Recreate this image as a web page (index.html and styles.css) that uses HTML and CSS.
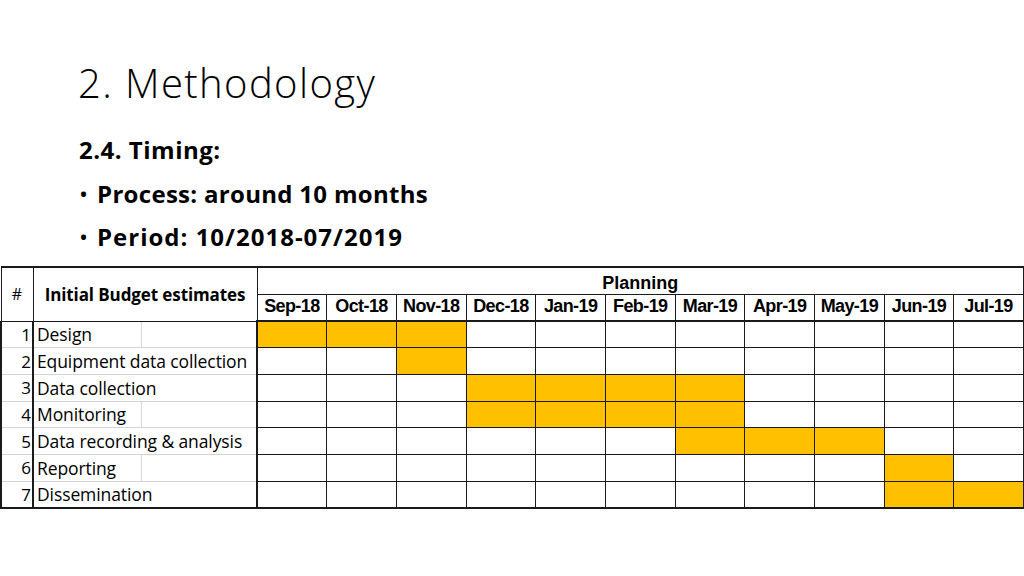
FILE: index.html
```html
<!DOCTYPE html>
<html>
<head>
<meta charset="utf-8">
<link rel="stylesheet" href="styles.css">
</head>
<body>
<div class="slide">
  <h1 class="title">2. Methodology</h1>
  <div class="body">
    <p class="sub">2.4. Timing:</p>
    <ul class="bullets">
      <li>Process: around 10 months</li>
      <li class="wide">Period: 10/2018-07/2019</li>
    </ul>
  </div>
  <table class="gantt">
    <colgroup>
      <col class="c-num"><col class="c-name">
      <col class="c-m"><col class="c-m"><col class="c-m"><col class="c-m"><col class="c-m"><col class="c-m"><col class="c-m"><col class="c-m"><col class="c-m"><col class="c-m"><col class="c-m">
    </colgroup>
    <thead>
      <tr class="h1">
        <th class="num-h" rowspan="2">#</th>
        <th class="name-h" rowspan="2">Initial Budget estimates</th>
        <th class="plan" colspan="11">Planning</th>
      </tr>
      <tr class="h2">
        <th>Sep-18</th><th>Oct-18</th><th>Nov-18</th><th>Dec-18</th><th>Jan-19</th><th>Feb-19</th><th>Mar-19</th><th>Apr-19</th><th>May-19</th><th>Jun-19</th><th>Jul-19</th>
      </tr>
    </thead>
    <tbody>
      <tr><td class="num">1</td><td class="name grid">Design</td><td class="on"></td><td class="on"></td><td class="on"></td><td></td><td></td><td></td><td></td><td></td><td></td><td></td><td></td></tr>
      <tr><td class="num">2</td><td class="name">Equipment data collection</td><td></td><td></td><td class="on"></td><td></td><td></td><td></td><td></td><td></td><td></td><td></td><td></td></tr>
      <tr><td class="num">3</td><td class="name">Data collection</td><td></td><td></td><td></td><td class="on"></td><td class="on"></td><td class="on"></td><td class="on"></td><td></td><td></td><td></td><td></td></tr>
      <tr><td class="num">4</td><td class="name grid">Monitoring</td><td></td><td></td><td></td><td class="on"></td><td class="on"></td><td class="on"></td><td class="on"></td><td></td><td></td><td></td><td></td></tr>
      <tr><td class="num">5</td><td class="name">Data recording &amp; analysis</td><td></td><td></td><td></td><td></td><td></td><td></td><td class="on"></td><td class="on"></td><td class="on"></td><td></td><td></td></tr>
      <tr><td class="num">6</td><td class="name grid">Reporting</td><td></td><td></td><td></td><td></td><td></td><td></td><td></td><td></td><td></td><td class="on"></td><td></td></tr>
      <tr><td class="num">7</td><td class="name">Dissemination</td><td></td><td></td><td></td><td></td><td></td><td></td><td></td><td></td><td></td><td class="on"></td><td class="on"></td></tr>
    </tbody>
  </table>
</div>
</body>
</html>
```

FILE: styles.css
```css
html, body {
  margin: 0;
  padding: 0;
  background: #ffffff;
}
.slide {
  width: 1024px;
  height: 576px;
  overflow: hidden;
  display: flex;
  flex-direction: column;
  color: #000;
  font-family: "Open Sans", "Liberation Sans", sans-serif;
}
.title {
  margin: 0;
  padding: 58px 0 0 78px;
  font-weight: 300;
  font-size: 40px;
  line-height: 50px;
  letter-spacing: 1.4px;
}
.body {
  padding-left: 79px;
  padding-top: 20px;
}
.sub {
  margin: 0;
  font-weight: 700;
  font-size: 24px;
  line-height: 44px;
  letter-spacing: 0.5px;
}
.bullets {
  margin: 0;
  padding: 0;
  list-style: none;
}
.bullets li {
  font-weight: 700;
  font-size: 24px;
  line-height: 43px;
  letter-spacing: 0.3px;
  display: flex;
  gap: 9px;
}
.bullets li.wide { letter-spacing: 1px; }
.bullets li::before {
  content: "•";
  font-weight: 400;
  letter-spacing: 0;
}
.gantt {
  margin-top: 8px;
  border-collapse: collapse;
  table-layout: fixed;
  width: 1023px;
  border-top: 2px solid #1a1a1a;
  border-bottom: 2px solid #1a1a1a;
}
.c-num { width: 32px; }
.c-name { width: 224px; }
.c-m { width: 69.7px; }
.gantt th, .gantt td {
  padding: 0;
  border: 1px solid #1a1a1a;
  overflow: visible;
  white-space: nowrap;
}
.h1, .h2 { height: 27px; }
.gantt tbody tr { height: 26.7px; }
.num-h {
  font-family: "Open Sans", sans-serif;
  font-weight: 400;
  font-size: 16px;
  border-left: 2px solid #1a1a1a;
}
.name-h {
  font-family: "Open Sans", sans-serif;
  font-weight: 700;
  font-size: 17px;
  letter-spacing: -0.1px;
  text-align: center;
  padding-left: 2px;
  border-right: 2px solid #1a1a1a;
}
.plan, .h2 th {
  font-family: "Liberation Sans Narrow", "Liberation Sans", sans-serif;
  font-weight: 700;
  font-size: 18px;
  text-align: center;
  vertical-align: bottom;
  padding-bottom: 1px;
}
.h2 th { font-size: 18px; letter-spacing: -0.6px; vertical-align: middle; }
.gantt thead tr.h2 th { border-bottom: 2px solid #1a1a1a; }
.num-h, .name-h { border-bottom: 2px solid #1a1a1a; }
.plan { border-right: 2px solid #1a1a1a; }
.gantt td:last-child, .h2 th:last-child { border-right: 2px solid #1a1a1a; }
.gantt td.num {
  text-align: right;
  font-family: "Open Sans", sans-serif;
  font-size: 17px;
  padding-right: 1px;
  border-left: 2px solid #1a1a1a;
  border-top-color: #d4d4d4;
  border-bottom-color: #d4d4d4;
}
.gantt td.name {
  font-family: "Open Sans", sans-serif;
  font-size: 17.5px;
  letter-spacing: -0.1px;
  padding-left: 3px;
  border-left: 2px solid #1a1a1a;
  border-right: 2px solid #1a1a1a;
  border-top-color: #d4d4d4;
  border-bottom-color: #d4d4d4;
}
.gantt td.grid {
  background: linear-gradient(to right, transparent 107px, #d9d9d9 107px, #d9d9d9 108px, transparent 108px);
}
.gantt td.on { background: #ffc000; }
.gantt tbody tr:last-child td { border-bottom: 2px solid #1a1a1a; }
```
